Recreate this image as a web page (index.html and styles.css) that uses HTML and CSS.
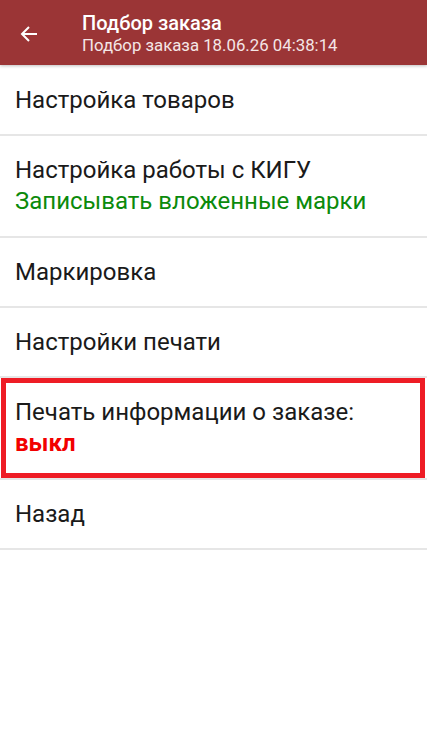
FILE: index.html
```html
<!DOCTYPE html>
<html lang="ru">
<head>
<meta charset="utf-8">
<title>Подбор заказа</title>
<link rel="stylesheet" href="styles.css">
</head>
<body>
<header class="appbar">
  <button class="appbar-back" aria-label="Назад">
    <svg width="18" height="18" viewBox="0 0 18 18" aria-hidden="true">
      <path d="M17 9H2M9 2L2 9l7 7" fill="none" stroke="#fff" stroke-width="2"/>
    </svg>
  </button>
  <div class="appbar-titles">
    <div class="appbar-title">Подбор заказа</div>
    <div class="appbar-subtitle">Подбор заказа 18.06.26 04:38:14</div>
  </div>
</header>
<main class="menu">
  <div class="menu-item menu-item-first">Настройка товаров</div>
  <div class="menu-item menu-item-tall">
    <div>Настройка работы с КИГУ</div>
    <div class="value-green">Записывать вложенные марки</div>
  </div>
  <div class="menu-item">Маркировка</div>
  <div class="menu-item">Настройки печати</div>
  <div class="menu-item menu-item-tall menu-item-marked">
    <div>Печать информации о заказе:</div>
    <div class="value-off">выкл</div>
  </div>
  <div class="menu-item">Назад</div>
</main>
</body>
</html>
```
FILE: styles.css
```css
* { box-sizing: border-box; }

html, body {
  margin: 0;
  padding: 0;
  background: #fff;
  font-family: Roboto, "Noto Sans", sans-serif;
  color: #1a1a1a;
}

.appbar {
  height: 65px;
  background: #9b3536;
  display: flex;
  align-items: center;
  position: relative;
  z-index: 1;
  box-shadow: 0 1px 3px rgba(0, 0, 0, 0.25);
}

.appbar-back {
  width: 82px;
  height: 65px;
  padding: 2px 0 0 20px;
  border: 0;
  background: none;
  display: flex;
  align-items: center;
  justify-content: flex-start;
}

.appbar-titles {
  display: flex;
  flex-direction: column;
  color: #fff;
  margin-top: 0;
}

.appbar-title {
  font-size: 20px;
  font-weight: 500;
  line-height: 26px;
}

.appbar-subtitle {
  font-size: 16.8px;
  line-height: 19px;
  color: #f4e6e6;
}

.menu {
  display: flex;
  flex-direction: column;
}

.menu-item {
  height: 70px;
  padding: 0 15px;
  border-bottom: 2px solid #e6e6e6;
  display: flex;
  flex-direction: column;
  justify-content: center;
  font-size: 24px;
  line-height: 31px;
}

.menu-item-first {
  height: 71px;
  padding-top: 2px;
}

.menu-item-tall {
  height: 102px;
}

.value-green {
  color: #0b8a0b;
}

.value-off {
  color: #f20000;
  font-weight: 700;
}

.menu-item-marked {
  position: relative;
}

/* highlight frame drawn over the row */
.menu-item-marked::after {
  content: "";
  position: absolute;
  left: 1px;
  right: 2px;
  top: 0;
  bottom: 0;
  border: 5px solid #ee1c25;
}
```
